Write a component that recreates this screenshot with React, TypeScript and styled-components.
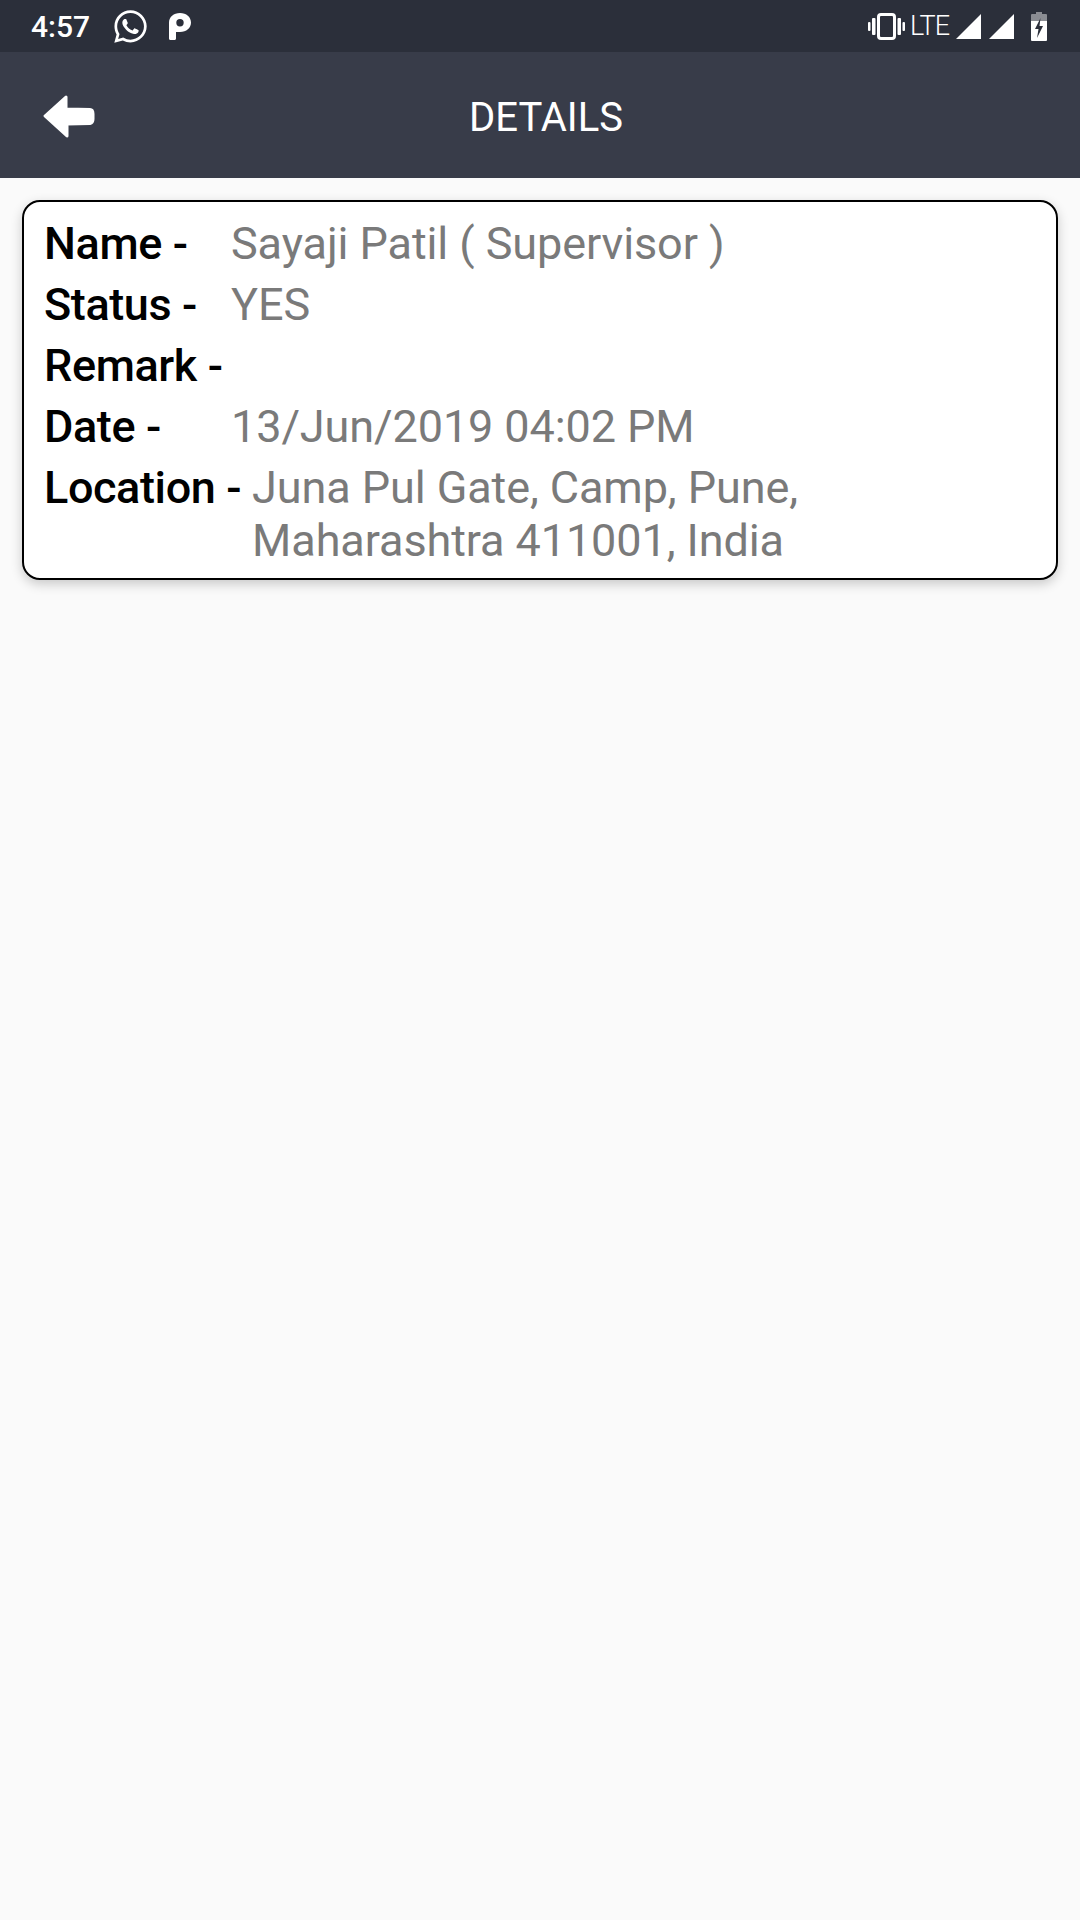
import { createGlobalStyle } from 'styled-components';
import styled from 'styled-components';
import { FaWhatsapp } from 'react-icons/fa';

const GlobalStyle = createGlobalStyle`
  html, body {
    margin: 0;
    padding: 0;
    background: #fafafa;
    font-family: Roboto, "Liberation Sans", sans-serif;
  }
`;

const Page = styled.div`
  width: 1080px;
  height: 1920px;
  background: #fafafa;
  overflow: hidden;
`;

const StatusBar = styled.div`
  height: 52px;
  background: #2b2f3a;
  color: #fff;
  display: flex;
  align-items: center;
  justify-content: space-between;
  padding: 0 33px 0 31px;
  box-sizing: border-box;
`;

const StatusGroup = styled.div`
  display: flex;
  align-items: center;
`;

const Clock = styled.span`
  font-size: 30px;
  font-weight: 500;
  width: 81px;
`;

const PIcon = styled.svg`
  margin-left: 20px;
  display: block;
`;

const VibrateIcon = styled.svg`
  display: block;
`;

const Lte = styled.span`
  font-size: 27px;
  font-weight: 300;
  letter-spacing: -1px;
  margin: 0 7px 0 5px;
`;

const SignalIcon = styled.svg`
  display: block;
  margin-right: 8px;
`;

const BatteryIcon = styled.svg`
  display: block;
  margin-left: 9px;
`;

const Toolbar = styled.div`
  height: 126px;
  background: #383c49;
  display: flex;
  align-items: center;
  justify-content: center;
  position: relative;
`;

const BackIcon = styled.svg`
  position: absolute;
  left: 42px;
  top: 42px;
`;

const Title = styled.div`
  color: #fff;
  font-size: 40px;
  margin: 5px 0 0 12px;
`;

const Content = styled.div`
  padding: 22px;
`;

const Card = styled.div`
  background: #fff;
  border: 2px solid #000;
  border-radius: 18px;
  padding: 15px 20px 11px;
  box-shadow: 0 4px 12px rgba(0, 0, 0, 0.2);
`;

const Row = styled.div`
  display: flex;
  font-size: 45px;
  line-height: 53px;
  margin-bottom: 8px;

  &:last-child {
    margin-bottom: 0;
  }
`;

const Label = styled.div`
  min-width: 187px;
  color: #000;
  font-weight: 500;
  letter-spacing: -0.4px;
  white-space: nowrap;
  padding-right: 11px;
  box-sizing: border-box;
`;

const Value = styled.div`
  color: #7a7a7a;
  width: 560px;
  letter-spacing: -0.1px;
`;

const rows = [
  { label: 'Name -', value: 'Sayaji Patil ( Supervisor )' },
  { label: 'Status -', value: 'YES' },
  { label: 'Remark -', value: '' },
  { label: 'Date -', value: '13/Jun/2019 04:02 PM' },
  { label: 'Location -', value: 'Juna Pul Gate, Camp, Pune, Maharashtra 411001, India' },
];

export default function App() {
  return (
    <Page>
      <GlobalStyle />
      <StatusBar>
        <StatusGroup>
          <Clock>4:57</Clock>
          <FaWhatsapp size={37} color="#fff" />
          <PIcon width="22" height="27" viewBox="0 0 22 27">
            <path
              fillRule="evenodd"
              fill="#fff"
              d="M0 9.500C0 4 4.600 0 11 0s11 4 11 9.500S17.400 19 11 19H7v6.500c0 .9-.6 1.500-1.500 1.500h-4C.6 27 0 26.400 0 25.500ZM11 6a3.700 3.700 0 1 0 0 7.400A3.700 3.700 0 0 0 11 6Z"
            />
          </PIcon>
        </StatusGroup>
        <StatusGroup>
          <VibrateIcon width="37" height="27" viewBox="0 0 37 27">
            <rect x="10.500" y="1.500" width="16" height="24" rx="2.500" fill="none" stroke="#fff" strokeWidth="3" />
            <rect x="4" y="5" width="3.500" height="17" rx="1" fill="#fff" />
            <rect x="29.500" y="5" width="3.500" height="17" rx="1" fill="#fff" />
            <rect x="0" y="9" width="2.500" height="9" rx="1" fill="#fff" />
            <rect x="34.500" y="9" width="2.500" height="9" rx="1" fill="#fff" />
          </VibrateIcon>
          <Lte>LTE</Lte>
          <SignalIcon width="25" height="25" viewBox="0 0 25 25">
            <polygon points="0,25 25,0 25,25" fill="#fff" />
          </SignalIcon>
          <SignalIcon width="25" height="25" viewBox="0 0 25 25">
            <polygon points="0,25 25,0 25,25" fill="#fff" />
          </SignalIcon>
          <BatteryIcon width="16" height="29" viewBox="0 0 16 29">
            <path d="M5 0h6v2h4a1 1 0 0 1 1 1v6H0V3a1 1 0 0 1 1-1h4Z" fill="#8a8c92" />
            <path d="M0 9h16v19a1 1 0 0 1-1 1H1a1 1 0 0 1-1-1Z" fill="#fff" />
            <path d="M9.500 6 4 17h3.500l-1.500 9 6-12H8.500Z" fill="#2b2f3a" />
          </BatteryIcon>
        </StatusGroup>
      </StatusBar>
      <Toolbar>
        <BackIcon width="54" height="45" viewBox="0 0 54 45">
          <path
            fill="#fff"
            stroke="#fff"
            strokeWidth="3"
            strokeLinejoin="round"
            d="M3 22 24 3v12l24 .5c2.500 0 3 1 3 4.500v5c0 3-.5 4-3 4.500L25 30v12Z"
          />
        </BackIcon>
        <Title>DETAILS</Title>
      </Toolbar>
      <Content>
        <Card>
          {rows.map((row) => (
            <Row key={row.label}>
              <Label>{row.label}</Label>
              <Value>{row.value}</Value>
            </Row>
          ))}
        </Card>
      </Content>
    </Page>
  );
}
